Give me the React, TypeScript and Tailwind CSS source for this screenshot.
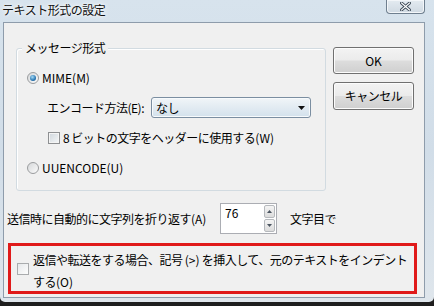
import type { ReactNode } from "react";

function Radio({ checked = false }: { checked?: boolean }) {
  return (
    <span className="flex size-[12px] shrink-0 items-center justify-center rounded-full border border-[#9a9c9e] bg-gradient-to-br from-[#d6d8da] to-[#fbfbfb]">
      {checked && (
        <span className="size-[6px] rounded-full bg-[radial-gradient(circle_at_40%_35%,#a8dcf6,#2a77b3_60%,#174f80)]" />
      )}
    </span>
  );
}

function Checkbox({ light = false }: { light?: boolean }) {
  return (
    <span
      className={
        light
          ? "size-[12px] shrink-0 border border-[#a9abad] bg-gradient-to-br from-[#e6e8ea] to-[#fdfdfd]"
          : "size-[12px] shrink-0 border border-[#8e9092] bg-gradient-to-br from-[#cfd6dc] to-[#f5f7f8] shadow-[inset_0_0_0_1px_#f4f4f4]"
      }
    />
  );
}

function Button({ children, className }: { children: ReactNode; className?: string }) {
  return (
    <div
      className={`flex w-[81px] items-center justify-center rounded-[3px] border border-[#707070] bg-[linear-gradient(#f3f3f3_0%,#ebebeb_49%,#dddddd_51%,#cfcfcf_100%)] shadow-[inset_0_0_0_1px_#fcfcfc] ${className ?? ""}`}
    >
      {children}
    </div>
  );
}

export default function App() {
  return (
    <div className="flex h-[306px] w-[434px] flex-col overflow-hidden bg-[#1e1e1e] font-['Noto_Sans_CJK_JP','Noto_Sans',sans-serif] text-[12px] tracking-[-0.5px] text-black">
      <div className="flex h-[302px] flex-col rounded-b-[5px] bg-gradient-to-b from-[#d7e3ed] via-[#d1dde8] to-[#dfe6ec]">
        {/* title bar */}
        <div className="flex h-[22px] shrink-0 items-start justify-between">
          <span className="mt-[2px] pl-[2px] leading-[16px] text-[#111] [text-shadow:0_0_6px_#fff,0_0_3px_#fff]">
            テキスト形式の設定
          </span>
          <div className="mr-[9px] flex h-[14px] w-[39px] items-center justify-center rounded-b-[4px] border border-t-0 border-[#6f7f8f] bg-gradient-to-b from-[#e4ebf1] to-[#cfd9e2] shadow-[inset_0_0_0_1px_#f3f6f9]">
            <svg width="11" height="9" viewBox="0 0 11 9">
              <path d="M1.5 1 L9.5 8 M9.5 1 L1.5 8" stroke="#3d4a57" strokeWidth="3" strokeLinecap="square" />
              <path d="M1.5 1 L9.5 8 M9.5 1 L1.5 8" stroke="#ffffff" strokeWidth="1.2" strokeLinecap="square" />
            </svg>
          </div>
        </div>

        <div className="flex flex-1 pl-[3px] pr-[9px] pb-[4px]">
          {/* client */}
          <div className="flex flex-1 flex-col border border-[#8e9cab] bg-[#f0f0f0]">
            <div className="flex items-start pl-[12px] pt-[24px]">
              {/* group box */}
              <div className="relative mt-[1px] h-[143px] w-[310px] rounded-[3px] border border-[#d2dbe1] shadow-[inset_1px_1px_0_#fff] pt-[19px]">
                <span className="absolute left-[5px] top-[-9px] bg-[#f0f0f0] px-[3px] leading-[16px]">
                  メッセージ形式
                </span>
                <div className="flex h-[20px] items-center gap-[3px] pl-[10px]">
                  <Radio checked />
                  <span className="tracking-normal">MIME(M)</span>
                </div>
                <div className="mt-[9px] flex h-[21px] items-center pl-[30px]">
                  <span className="w-[104px]">エンコード方法(E):</span>
                  <div className="flex h-[21px] w-[160px] items-center justify-between rounded-[3px] border border-[#7b8ea1] bg-gradient-to-b from-[#f1f5f8] to-[#d3e1ec] pl-[4px] pr-[5px] shadow-[inset_0_0_0_1px_#f7fafc]">
                    <span>なし</span>
                    <svg width="7" height="4" viewBox="0 0 7 4">
                      <path d="M0 0 H7 L3.5 4 Z" fill="#111" />
                    </svg>
                  </div>
                </div>
                <div className="mt-[11px] flex h-[18px] items-center gap-[3px] pl-[31px]">
                  <Checkbox />
                  <span>
                    8 ビットの文字をヘッダーに使用する<span className="tracking-normal">(W)</span>
                  </span>
                </div>
                <div className="mt-[12px] flex h-[18px] items-center gap-[3px] pl-[10px]">
                  <Radio />
                  <span className="tracking-normal">UUENCODE(U)</span>
                </div>
              </div>

              {/* buttons */}
              <div className="ml-[7px] flex flex-col gap-[8px]">
                <Button className="h-[27px] tracking-normal">OK</Button>
                <Button className="h-[28px]">キャンセル</Button>
              </div>
            </div>

            {/* wrap row */}
            <div className="mt-[12px] flex h-[31px] items-center pl-[3px]">
              <span className="w-[213px]">
                送信時に自動的に文字列を折り返す<span className="tracking-normal">(A)</span>
              </span>
              <div className="flex h-[31px] w-[57px] border border-[#abadb3] bg-white">
                <span className="flex-1 pl-[4px] pt-[1px] leading-[16px] tracking-normal">76</span>
                <div className="flex w-[12px] flex-col gap-[1px] py-[1px] pr-[1px]">
                  <div className="flex flex-1 items-center justify-center rounded-[2px] border border-[#b6b9bd] bg-gradient-to-b from-[#f4f4f4] to-[#dcdcdc]">
                    <svg width="5" height="3" viewBox="0 0 5 3">
                      <path d="M0 3 H5 L2.5 0 Z" fill="#4b5560" />
                    </svg>
                  </div>
                  <div className="flex flex-1 items-center justify-center rounded-[2px] border border-[#b6b9bd] bg-gradient-to-b from-[#f4f4f4] to-[#dcdcdc]">
                    <svg width="5" height="3" viewBox="0 0 5 3">
                      <path d="M0 0 H5 L2.5 3 Z" fill="#4b5560" />
                    </svg>
                  </div>
                </div>
              </div>
              <span className="ml-[13px]">文字目で</span>
            </div>

            {/* highlighted option */}
            <div className="ml-[4px] mt-[9px] flex h-[51px] w-[409px] items-center gap-[4px] border-[3px] border-[#e01a1a] pl-[6px]">
              <Checkbox light />
              <span className="pt-[4px] leading-[22px]">
                返信や転送をする場合、記号 <span className="tracking-normal">(&gt;)</span> を挿入して、元のテキストをインデント
                <br />
                する<span className="tracking-normal">(O)</span>
              </span>
            </div>
          </div>
        </div>
      </div>
    </div>
  );
}
